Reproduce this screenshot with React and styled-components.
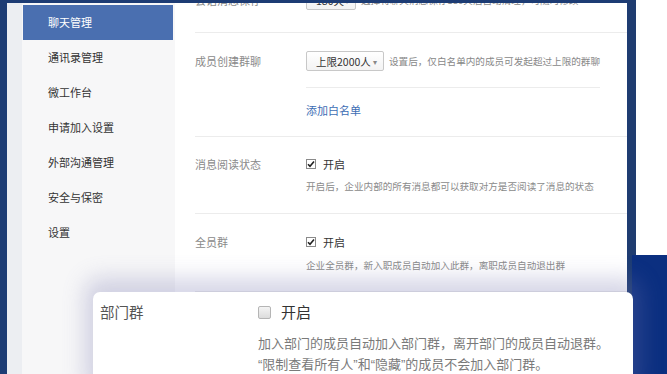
import React from 'react'
import styled, { createGlobalStyle } from 'styled-components'

const Global = createGlobalStyle`
  html, body { margin: 0; padding: 0; }
  body {
    width: 667px;
    height: 374px;
    overflow: hidden;
    background: #1d3c74;
    font-family: "Noto Sans CJK SC", "Noto Sans", sans-serif;
  }
`

const Page = styled.div`
  position: relative;
  display: flex;
  height: 374px;
  padding: 3px 0 0 7px;
  box-sizing: border-box;
`

const Window = styled.div`
  display: flex;
  width: 620px;
  height: 100%;
  background: #fff;
  overflow: hidden;
`

const Strip = styled.div`
  width: 15px;
  background: #eceef2;
`

const Sidebar = styled.ul`
  width: 150px;
  margin: 0;
  padding: 2px 2px 0 1px;
  list-style: none;
  background: #f7f7f8;
`

const MenuItem = styled.li`
  height: 35px;
  line-height: 35px;
  padding-left: 25px;
  font-size: 11px;
  color: ${p => (p.$active ? '#fff' : '#333')};
  background: ${p => (p.$active ? '#4a6fb0' : 'transparent')};
`

const Content = styled.div`
  flex: 1;
  padding-left: 20px;
  overflow: hidden;
`

const Rows = styled.div`
  margin-top: -31px;
`

const Row = styled.div`
  display: grid;
  grid-template-columns: 111px 1fr;
  padding: ${p => p.$pad || '18px 0 18px'};
  border-bottom: 1px solid #ececec;
`

const Label = styled.div`
  font-size: 11px;
  line-height: 16px;
  color: #8a8a8a;
  padding-top: ${p => p.$top || 0}px;
`

const Line = styled.div`
  display: flex;
  align-items: center;
  gap: 5px;
`

const Select = styled.div`
  display: flex;
  align-items: center;
  justify-content: space-between;
  box-sizing: border-box;
  width: ${p => p.$w}px;
  height: 20px;
  padding: 0 6px 0 9px;
  border: 1px solid #c8c8c8;
  border-radius: 2px;
  background: linear-gradient(#fff, #f3f3f3);
  font-size: 10.5px;
  color: #333;
  &::after {
    content: '▾';
    font-size: 8px;
    color: #888;
  }
`

const Hint = styled.span`
  font-size: 9.6px;
  line-height: 16px;
  color: #888;
  white-space: nowrap;
`

const SubRule = styled.div`
  width: 294px;
  height: 1px;
  margin: 16px 0 14px;
  background: #ececec;
`

const Link = styled.a`
  display: block;
  font-size: 11px;
  line-height: 16px;
  color: #3d6db4;
  cursor: pointer;
`

const Check = styled.span`
  display: inline-flex;
  align-items: center;
  justify-content: center;
  box-sizing: border-box;
  width: 10px;
  height: 10px;
  border: 1px solid #8a8a8a;
  background: #fff;
  margin-right: 2px;
`

const CheckText = styled.span`
  font-size: 11px;
  line-height: 16px;
  color: #333;
`

const Desc = styled.div`
  margin-top: ${p => p.$gap || 6}px;
  font-size: 9.6px;
  line-height: 16px;
  color: #8a8a8a;
  white-space: nowrap;
`

const RightPane = styled.div`
  flex: 1;
  display: grid;
  grid-template-rows: 255px 1fr;
  margin-top: -3px;
`

const RightTop = styled.div`
  border-left: 8px solid #1f3c70;
  margin-left: 1px;
  background: #fff;
`

const RightBottom = styled.div`
  margin-left: 5px;
  background: #0b2f80;
`

const Popup = styled.div`
  position: absolute;
  left: 93px;
  top: 292px;
  width: 540px;
  height: 100px;
  box-sizing: border-box;
  padding: 10px 0 0 7px;
  display: grid;
  grid-template-columns: 158px 1fr;
  background: #fff;
  border-radius: 7px;
  box-shadow: 0 -6px 22px 8px rgba(120, 120, 175, 0.3);
`

const PopLabel = styled.div`
  font-size: 14.5px;
  line-height: 20px;
  color: #555;
`

const BigCheck = styled.span`
  display: inline-block;
  box-sizing: border-box;
  width: 13px;
  height: 13px;
  margin-right: 5px;
  border: 1px solid #b5b5b5;
  border-radius: 2px;
  background: linear-gradient(#f4f4f4, #dcdcdc);
`

const PopCheckText = styled.span`
  font-size: 15px;
  line-height: 20px;
  color: #333;
`

const PopDesc = styled.div`
  margin-top: 11px;
  font-family: "Liberation Sans", "Noto Sans CJK SC", sans-serif;
  font-size: 13px;
  line-height: 21px;
  color: #7a7a7a;
  white-space: nowrap;
`

const Tick = () => (
  <svg width="8" height="8" viewBox="0 0 8 8">
    <path d="M1 4.2 L3 6.3 L7 1.5" fill="none" stroke="#222" strokeWidth="1.6" />
  </svg>
)

const menu = ['聊天管理', '通讯录管理', '微工作台', '申请加入设置', '外部沟通管理', '安全与保密', '设置']

export default function App() {
  return (
    <>
      <Global />
      <Page>
        <Window>
          <Strip />
          <Sidebar>
            {menu.map((m, i) => (
              <MenuItem key={m} $active={i === 0}>{m}</MenuItem>
            ))}
          </Sidebar>
          <Content>
            <Rows>
              <Row $pad="18px 0 22px">
                <Label $top={2}>会话消息保存</Label>
                <Line>
                  <Select $w={50}>180天</Select>
                  <Hint>选择将聊天消息保存180天后自动清理，可随时修改</Hint>
                </Line>
              </Row>
              <Row>
                <Label $top={2}>成员创建群聊</Label>
                <div>
                  <Line>
                    <Select $w={78}>上限2000人</Select>
                    <Hint>设置后，仅白名单内的成员可发起超过上限的群聊</Hint>
                  </Line>
                  <SubRule />
                  <Link>添加白名单</Link>
                </div>
              </Row>
              <Row $pad="19px 0 19px">
                <Label>消息阅读状态</Label>
                <div>
                  <Line>
                    <Check><Tick /></Check>
                    <CheckText>开启</CheckText>
                  </Line>
                  <Desc>开启后，企业内部的所有消息都可以获取对方是否阅读了消息的状态</Desc>
                </div>
              </Row>
              <Row $pad="20px 0 18px">
                <Label>全员群</Label>
                <div>
                  <Line>
                    <Check><Tick /></Check>
                    <CheckText>开启</CheckText>
                  </Line>
                  <Desc $gap={7}>企业全员群，新入职成员自动加入此群，离职成员自动退出群</Desc>
                </div>
              </Row>
            </Rows>
          </Content>
        </Window>
        <RightPane>
          <RightTop />
          <RightBottom />
        </RightPane>
        <Popup>
          <PopLabel>部门群</PopLabel>
          <div>
            <Line>
              <BigCheck />
              <PopCheckText>开启</PopCheckText>
            </Line>
            <PopDesc>
              加入部门的成员自动加入部门群，离开部门的成员自动退群。
              <br />
              “限制查看所有人”和“隐藏”的成员不会加入部门群。
            </PopDesc>
          </div>
        </Popup>
      </Page>
    </>
  )
}
